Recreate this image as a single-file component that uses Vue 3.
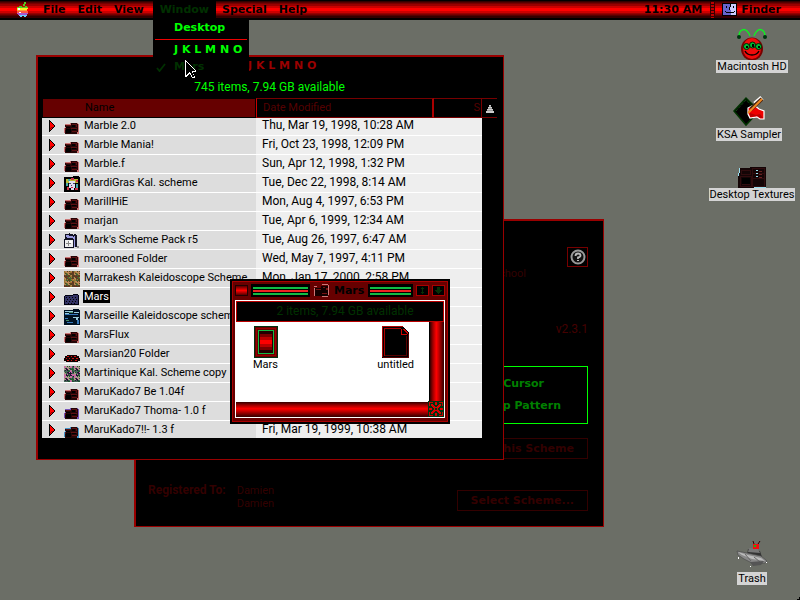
<script setup>
import { ref } from 'vue'

const menus = ['File', 'Edit', 'View', 'Window', 'Special', 'Help']
const openMenu = ref('Window')
const selected = ref('Mars')

const rows = [
  { name: 'Marble 2.0', date: 'Thu, Mar 19, 1998, 10:28 AM', icon: 'folder', tint: '#c77' },
  { name: 'Marble Mania!', date: 'Fri, Oct 23, 1998, 12:09 PM', icon: 'folder', tint: '#c77' },
  { name: 'Marble.f', date: 'Sun, Apr 12, 1998, 1:32 PM', icon: 'folder', tint: '#c77' },
  { name: 'MardiGras Kal. scheme', date: 'Tue, Dec 22, 1998, 8:14 AM', icon: 'mask' },
  { name: 'MarillHiE', date: 'Mon, Aug 4, 1997, 6:53 PM', icon: 'folder', tint: '#c77' },
  { name: 'marjan', date: 'Tue, Apr 6, 1999, 12:34 AM', icon: 'folder', tint: '#c77' },
  { name: "Mark's Scheme Pack r5", date: 'Tue, Aug 26, 1997, 6:47 AM', icon: 'pack' },
  { name: 'marooned Folder', date: 'Wed, May 7, 1997, 4:11 PM', icon: 'folder', tint: '#c77' },
  { name: 'Marrakesh Kaleidoscope Scheme', date: 'Mon, Jan 17, 2000, 2:58 PM', icon: 'mosaic', colors: ['#973', '#542', '#463', '#b85', '#632'] },
  { name: 'Mars', date: '', icon: 'blue' },
  { name: 'Marseille Kaleidoscope scheme', date: '', icon: 'harbor' },
  { name: 'MarsFlux', date: '', icon: 'folder', tint: '#c77' },
  { name: 'Marsian20 Folder', date: '', icon: 'saucer' },
  { name: 'Martinique Kal. Scheme copy', date: '', icon: 'mosaic', colors: ['#c6a', '#253', '#213', '#a98', '#465'] },
  { name: 'MaruKado7 Be 1.04f', date: '', icon: 'folder', tint: '#c77' },
  { name: 'MaruKado7 Thoma- 1.0 f', date: '', icon: 'folder', tint: '#75b' },
  { name: 'MaruKado7!!- 1.3 f', date: 'Fri, Mar 19, 1999, 10:38 AM', icon: 'folder', tint: '#49c' }
]

const tiles = Array.from({ length: 64 }, (_, i) => ({
  x: (i % 8) * 2,
  y: Math.floor(i / 8) * 2,
  c: (i * 7 + Math.floor(i / 8) * 3 + ((i * i) % 5)) % 5
}))
</script>

<template>
  <div class="screen">
    <header class="menubar">
      <svg class="apple" viewBox="0 0 14 16" shape-rendering="crispEdges">
        <path fill="#5c2" d="M8 0h2v2H9v2H7V2h1zM3 4h3v1h3V4h2v1h1v1H1V5h2z" />
        <path fill="#fe2" d="M1 6h11v1h-1v1H1z" />
        <path fill="#f93" d="M1 8h10v1H1z" />
        <path fill="#f54" d="M1 9h11v2H1z" />
        <path fill="#a5c" d="M1 11h11v1h-1v1H2v-1H1z" />
        <path fill="#6cf" d="M3 13h8v1h-1v1H8v-1H6v1H4v-1H3z" />
        <path fill="#fff" d="M2 6h2v2H2zM3 10h2v1H3z" />
      </svg>
      <nav class="menus">
        <button
          v-for="m in menus"
          :key="m"
          class="menu-title"
          :class="{ open: m === openMenu }"
          type="button"
          @click="openMenu = m"
        >{{ m }}</button>
      </nav>
      <span class="clock">11:30 AM</span>
      <i class="grip"></i>
      <button class="app-switch" type="button">
        <svg width="15" height="13" viewBox="0 0 15 13" shape-rendering="crispEdges">
          <path fill="#000" d="M0 0h15v13H0z" />
          <path fill="#66c" d="M1 1h7v3H7v3h2v5H1z" />
          <path fill="#ccf" d="M9 1h5v11H9V7H8V4h1z" />
          <path fill="#000" d="M4 3h1v2H4zM11 3h1v2h-1zM3 8h1v1H3zM4 9h8v1H4zM12 8h1v1h-1z" />
        </svg>
        Finder
      </button>
    </header>

    <main class="desktop">
      <aside class="icons">
        <figure class="icon">
          <svg width="32" height="32" viewBox="0 0 32 32">
            <path fill="none" stroke="#1e2" stroke-width="1.4" d="M3 8C3 2 8 0 11 3q2 2 3 5M29 8c0-6-5-8-8-5q-2 2-3 5" />
            <circle cx="3" cy="9" r="2" fill="#031" />
            <circle cx="29" cy="9" r="2" fill="#031" />
            <ellipse cx="16" cy="21" rx="11" ry="11.500" fill="#700" />
            <ellipse cx="16" cy="20.500" rx="9" ry="10.500" fill="#f00b0b" />
            <g fill="#0b3" stroke="#020" stroke-width="1">
              <circle cx="10.500" cy="18.500" r="3" />
              <circle cx="16.500" cy="17" r="3" />
              <circle cx="22.500" cy="18.500" r="3" />
            </g>
            <path fill="#000" d="M10 18h2v2h-2zM16 16h2v3h-2zM22 18h2v2h-2z" />
            <path fill="none" stroke="#000" stroke-width="1.400" d="M9 23q2 4 7 4t7-4" />
          </svg>
          <figcaption>Macintosh HD</figcaption>
        </figure>
        <figure class="icon sampler">
          <svg width="34" height="32" viewBox="0 0 34 32">
            <path fill="#000" stroke="#030" stroke-width="1.500" d="M2 15L14 2l13 13-13 14z" />
            <path fill="none" stroke="#175c17" stroke-dasharray="1 1" d="M4 15L14 4l10 11" />
            <path fill="#e00" stroke="#fff" stroke-width="1.200" d="M16 12l6-3 5 4 5 2v8h-4l-3-2-7 1-2-4z" />
            <path fill="#b00" d="M18 17l6 2 4-1 3 4h-3l-3-2-7 1z" />
            <path stroke="#fff" stroke-width="5" d="M23 8l7-6" />
            <path stroke="#421" stroke-width="4" d="M19 13L30 3" />
            <path stroke="#e82" stroke-width="2" d="M16 17L30 3" />
          </svg>
          <figcaption>KSA Sampler</figcaption>
        </figure>
        <figure class="icon">
          <svg width="32" height="32" viewBox="0 0 32 32" shape-rendering="crispEdges">
            <path fill="#140506" d="M3 12h11v-1h16v21H2V18h1z" />
            <path fill="none" stroke="#300c0e" d="M5.500 14.500h9v4h-9zM4.500 20.500h11v10h-11zM16.500 12.500h12v18h-12zM17 17.500h11M17 22.500h11M6 28.500h8" />
            <path fill="#000" d="M6 22h8v6H6z" />
            <path fill="#9de" d="M3 12h1v5H3zM2 17h1v3H2zM18 31h12v1H18zM20 14h2v1h-2zM20 17h2v1h-2zM20 20h2v1h-2z" />
            <path fill="#622" d="M23 15h3v1h-3zM23 18h3v1h-3zM23 21h3v1h-3z" />
          </svg>
          <figcaption>Desktop Textures</figcaption>
        </figure>
        <figure class="icon trash">
          <svg width="32" height="32" viewBox="0 0 32 32">
            <path fill="#333" d="M12 9l12 2 2 6-15-2z" />
            <path fill="#777" d="M13 8l9 1 2 4-12-1z" />
            <path fill="#e11" d="M17 4h6v5h-6z" />
            <path fill="#1b1" d="M18 5h2v2h-2z" />
            <path stroke="#300" d="M18 4l-1-3M22 4l2-3" />
            <path fill="#888" stroke="#444" stroke-width=".6" d="M1 11l10 2 14 3 6 5-2 2-11 1-10-5-6-4z" />
            <path fill="#bbb" d="M2 12l10 3 13 3 4 3-13-2-10-4z" />
            <path fill="none" stroke="#666" d="M9 14l6 7M18 17l6 5" />
            <path fill="#555" d="M14 22l14-1-3 4-8 1z" />
            <path fill="#fff" d="M2 17h1v2H2zM14 26h1v1h-1zM30 22h1v1h-1z" />
          </svg>
          <figcaption>Trash</figcaption>
        </figure>
      </aside>

      <section class="window about">
        <button class="help" type="button" aria-label="?">
          <svg width="16" height="16" viewBox="0 0 16 16">
            <circle cx="8" cy="8" r="6.500" fill="#111" stroke="#999" stroke-width="2" />
            <path fill="none" stroke="#bbb" stroke-width="1.800" d="M5.500 7q0-2.500 2.500-2.500T10.500 6.500Q10.500 8 8 8.500V10" />
            <path fill="#bbb" d="M7 11h2v1H7z" />
          </svg>
        </button>
        <p class="school">school</p>
        <p class="version">v2.3.1</p>
        <div class="options">
          <span class="cursor-option">Cursor</span>
          <span>Desktop Pattern</span>
        </div>
        <button class="plate" type="button">This Scheme</button>
        <footer class="registration">
          <strong>Registered To:</strong>
          <span>Damien<br>Damien</span>
          <button class="plate select" type="button">Select Scheme...</button>
        </footer>
      </section>

      <section class="window list">
        <h2 class="list-title">J K L M N O</h2>
        <p class="status">745 items, 7.94 GB available</p>
        <table class="files">
          <thead>
            <tr>
              <th class="h-name">Name</th>
              <th class="h-date">Date Modified</th>
              <th class="h-size">S</th>
              <th class="h-sort">
                <svg width="8" height="8" viewBox="0 0 8 8" shape-rendering="crispEdges">
                  <path fill="#ccc" d="M3 0h2v2H3zM2 2h4v2H2zM1 4h6v2H1zM0 6h8v2H0z" />
                  <path fill="#999" d="M3 1h2v1H3zM2 3h4v1H2zM1 5h6v1H1z" />
                </svg>
              </th>
            </tr>
          </thead>
          <tbody>
            <tr v-for="row in rows" :key="row.name" @click="selected = row.name">
              <td class="name">
                <button class="twist" type="button">
                  <svg width="6" height="12" viewBox="0 0 6 12" shape-rendering="crispEdges">
                    <path fill="#000" d="M0 0h1v1h1v1h1v1h1v1h1v1h1v2H5v1H4v1H3v1H2v1H1v1H0z" />
                    <path fill="#f00" d="M1 2h1v1h1v1h1v1h1v2H4v1H3v1H2v1H1z" />
                    <path fill="#900" d="M1 8h1v1H1zM2 7h2v1H2z" />
                  </svg>
                </button>
                <svg class="glyph" width="16" height="16" viewBox="0 0 16 16" shape-rendering="crispEdges">
                  <g v-if="row.icon === 'folder'">
                    <path :fill="row.tint" d="M1 5h5V4h8v1h1v10H1v-1H0V9h1z" />
                    <path fill="#240607" d="M1 6h6V4h6v1h1v8h-1v2H1V9h1V8H1z" />
                    <path fill="#5c1012" d="M2 6h5v1H2zM8 5h5v1H8zM12 6h1v2h-1zM7 9h6v1H7zM8 12h5v1H8zM1 9h1v2H1z" />
                    <path fill="#000" d="M2 8h4v1H2zM2 10h5v4H2zM8 6h3v2H8zM8 10h4v1H8z" />
                  </g>
                  <g v-else-if="row.icon === 'mask'">
                    <path fill="#000" d="M0 1h9V0h6v1h1v15H0z" />
                    <path fill="#bb3" d="M2 3h12v4H2z" />
                    <path fill="#4aa" d="M2 7h2v3H2zM12 8h2v4h-2zM4 3h2v2H4z" />
                    <path fill="#c34" d="M3 11h2v3H3zM11 12h3v2h-3zM7 2h3v2H7zM12 4h2v2h-2z" />
                    <path fill="#dde" d="M5 5h6v7h-1v2H7v-2H5z" />
                    <path fill="#446" d="M5 7h2v1H5zM9 7h2v1H9zM7 9h1v1H7z" />
                    <path fill="#c24" d="M7 11h2v1H7z" />
                  </g>
                  <g v-else-if="row.icon === 'pack'">
                    <path fill="#112" d="M1 1h4V0h1v1h3v1h1V1h2v1h1v12h-3v1H0V6h1z" />
                    <path fill="#99d" d="M2 2h3v1h4v1h1V3h1v11h-1V6H9V5H3V4H2z" />
                    <path fill="#eee" d="M1 7h8v7H1z" />
                    <path fill="#888" d="M4 8h1v5H4zM2 10h5v1H2zM13 13h2v2h-2z" />
                    <path fill="#fff" d="M5 8h3v2H5z" />
                  </g>
                  <g v-else-if="row.icon === 'mosaic'">
                    <path fill="#211" d="M0 1h9V0h6v1h1v15H0z" />
                    <rect v-for="t in tiles" :key="t.x + '-' + t.y" :x="t.x" :y="t.y" width="2" height="2" :fill="row.colors[t.c]" />
                    <rect v-for="t in tiles" :key="'b' + t.x + '-' + t.y" :x="t.x + 1" :y="t.y" width="1" height="1" :fill="row.colors[(t.c + 3) % 5]" />
                  </g>
                  <g v-else-if="row.icon === 'blue'">
                    <path fill="#001" d="M0 6h1V5h8V4h5v1h1v10H0z" />
                    <path fill="#336" d="M1 6h8V5h5v9H1z" />
                    <path fill="#000" d="M2 7h1v1H2zM5 7h1v1H5zM8 7h1v1H8zM11 7h1v1h-1zM3 9h1v1H3zM6 9h1v1H6zM9 9h1v1H9zM12 9h1v1h-1zM2 11h1v1H2zM5 11h1v1H5zM8 11h1v1H8zM11 11h1v1h-1zM4 13h1v1H4zM7 13h1v1H7zM10 13h1v1h-1z" />
                  </g>
                  <g v-else-if="row.icon === 'harbor'">
                    <path fill="#012" d="M0 1h9V0h6v1h1v15H0z" />
                    <path fill="#9cd" d="M1 2h8v1H1zM10 3h5v1h-5zM1 4h4v1H1zM9 8h6v1H9zM12 9h2v2h-2z" />
                    <path fill="#37b" d="M1 5h13v1H1zM3 13h6v1H3zM13 11h2v4h-2zM1 9h3v1H1z" />
                    <path fill="#486" d="M5 3h4v1H5zM2 11h3v1H2z" />
                  </g>
                  <g v-else>
                    <path fill="#100" d="M3 8h10v1h2v2h1v3h-2v1H2v-1H0v-3h1V9h2z" />
                    <path fill="#c11" d="M3 9h2v1H3zM7 9h1v1H7zM10 9h2v1h-2zM2 11h1v1H2zM5 11h1v1H5zM8 11h2v1H8zM12 11h2v1h-2zM3 13h2v1H3zM7 13h1v1H7zM11 13h2v1h-2z" />
                  </g>
                </svg>
                <span class="label" :class="{ picked: row.name === selected }">{{ row.name }}</span>
              </td>
              <td class="date">{{ row.date }}</td>
            </tr>
          </tbody>
        </table>
      </section>

      <section class="mars">
        <header class="mars-bar">
          <button class="box close" type="button"></button>
          <i class="stripes wide"></i>
          <h2>
            <svg width="16" height="14" viewBox="0 0 16 14" shape-rendering="crispEdges">
              <path fill="#c77" d="M0 2h3v1H0zM0 4h1v8H0zM8 0h6v1H8zM14 1h1v10h-1zM8 12h6v1H8z" />
              <path fill="#100" d="M1 4h6V2h7v10H1z" />
              <path fill="#711" d="M2 5h5v1H2zM9 3h2v1H9zM12 4h2v2h-2zM8 9h5v1H8z" />
            </svg>
            Mars
          </h2>
          <i class="stripes"></i>
          <button class="box" type="button">
            <svg width="7" height="7" viewBox="0 0 7 7" shape-rendering="crispEdges"><path fill="#063006" d="M3 0h1v1h1v1H4v3h1v1H4v1H3V6H2V5h1V2H2V1h1z" /></svg>
          </button>
          <button class="box" type="button">
            <svg width="7" height="7" viewBox="0 0 7 7" shape-rendering="crispEdges"><path fill="#063006" d="M2 0h3v3h2v1H6v1H5v1H4v1H3V6H2V5H1V4H0V3h2z" /></svg>
          </button>
        </header>
        <div class="mars-body">
          <p class="mars-status">2 items, 7.94 GB available</p>
          <div class="pane">
            <figure>
              <svg width="24" height="32" viewBox="0 0 24 32" shape-rendering="crispEdges">
                <path fill="#600" stroke="#031" d="M.5.500h23v31H.5z" />
                <path fill="none" stroke="#900" d="M2.500 2.500h19v27h-19z" />
                <path fill="#200" stroke="#1b4" d="M4.500 4.500h15v23h-15z" />
                <path fill="#700" d="M6 8h12v16H6z" />
                <path fill="#b00" d="M6 11h12v10H6z" />
                <path fill="#f00" d="M6 14h12v4H6z" />
              </svg>
              <figcaption>Mars</figcaption>
            </figure>
            <figure>
              <svg width="28" height="32" viewBox="0 0 28 32" shape-rendering="crispEdges">
                <path fill="#000" d="M0 0h21v1h1v1h1v1h1v1h1v1h1v1h1v26H0z" />
                <path fill="none" stroke="#a00" d="M.5 31V.500h20M2.500 30V2.500h16" />
                <path fill="none" stroke="#500" d="M1 31.500h25.500V8M3 29.500h21.500V10" />
                <path fill="none" stroke="#c00" d="M19.500 3v5h5M21 3.500h1v1h1v1h1v1h1v1" />
              </svg>
              <figcaption>untitled</figcaption>
            </figure>
          </div>
          <i class="vbar"></i>
          <i class="hbar"></i>
          <svg class="grow" viewBox="0 0 16 16" shape-rendering="crispEdges">
            <path fill="#031" d="M0 0h16v16H0z" />
            <path fill="none" stroke="#c00" d="M1.500 1.500h13v13h-13z" />
            <path fill="#031" d="M5 1h2v1H5zM9 1h2v1H9zM5 14h2v1H5zM9 14h2v1H9zM1 5h1v2H1zM1 9h1v2H1zM14 5h1v2h-1zM14 9h1v2h-1z" />
            <path fill="#d00" d="M3 3h2v1h1v1h1v1h2V5h1V4h1V3h2v2h-1v1h-1v1h-1v2h1v1h1v1h1v2h-2v-1h-1v-1H9v-1H7v1H6v1H5v1H3v-2h1v-1h1V9h1V7H5V6H4V5H3zM7 2h2v2H7zM7 12h2v2H7zM2 7h2v2H2zM12 7h2v2h-2z" />
            <path fill="#031" d="M7 7h2v2H7z" />
          </svg>
        </div>
      </section>
    </main>

    <div v-if="openMenu === 'Window'" class="dropdown">
      <button type="button">Desktop</button>
      <hr>
      <button type="button">J K L M N O</button>
      <button class="dim" type="button">
        <svg width="10" height="9" viewBox="0 0 10 9"><path fill="none" stroke="#003000" stroke-width="1.800" d="M1 5l2.500 3L9 1" /></svg>Mars
      </button>
    </div>

    <svg class="pointer" width="12" height="18" viewBox="0 0 12 18" shape-rendering="crispEdges">
      <path fill="#fff" d="M0 0h1v1h1v1h1v1h1v1h1v1h1v1h1v1h1v1h1v1h1v1h1v2H8v2h1v2h1v2H7v-1H6v-2H5v-1H4v1H3v1H2v1H0z" />
      <path fill="#000" d="M1 2h1v1h1v1h1v1h1v1h1v1h1v1h1v1h1v1h1v1H7v2h1v2h1v2H7v-2H6v-2H5v-1H4v1H3v1H2v1H1z" />
    </svg>
    <i class="corner"></i>
  </div>
</template>

<style>
body {
  margin: 0;
  background: #6b6e66;
}
</style>

<style scoped>
.screen {
  position: relative;
  display: flex;
  flex-direction: column;
  min-height: 100vh;
  overflow: hidden;
  background: #6b6e66;
  font: 11px/13px Roboto, sans-serif;
  color: #000;
}
button {
  margin: 0;
  padding: 0;
  border: 0;
  background: none;
  color: inherit;
  font: inherit;
}
p, h2, figure, hr {
  margin: 0;
}
svg {
  display: block;
  flex: none;
}
.menubar, .dropdown, .list-title, .mars h2, .options, .plate {
  font: bold 11px/14px "DejaVu Sans", sans-serif;
}

.menubar {
  display: flex;
  align-items: center;
  height: 20px;
  box-sizing: border-box;
  padding: 0 19px 1px 16px;
  background: linear-gradient(#000 1px, #300 1px 2px, #500 2px 3px, #700 3px 4px, #900 4px 6px, #c00 6px 8px, #f00 8px 11px, #c00 11px 13px, #900 13px 14px, #700 14px 15px, #500 15px 16px, #300 16px 18px, #000 18px);
}
.apple {
  width: 14px;
  height: 16px;
}
.menus {
  display: flex;
  align-self: stretch;
  margin: 0 auto 0 7px;
}
.menu-title {
  padding: 0 6px;
}
.menu-title.open {
  padding: 0 7px;
  margin: 0 0 -1px 3px;
  background: #000;
  color: #003000;
}
.grip {
  width: 3px;
  height: 17px;
  margin: 0 7px 0 8px;
  border: solid #300;
  border-width: 0 1px;
  background: repeating-linear-gradient(#300 0 1px, #b00 1px 3px);
}
.app-switch {
  display: flex;
  align-items: center;
  gap: 4px;
}

.desktop {
  flex: 1;
  display: flex;
  justify-content: flex-end;
}
.icons {
  display: flex;
  flex-direction: column;
  gap: 15px;
  width: 96px;
  padding: 8px 0 15px;
}
.icon {
  display: flex;
  flex-direction: column;
  align-items: center;
}
.icon.sampler {
  margin-top: 8px;
  padding-right: 6px;
}
.icon.trash {
  margin-top: auto;
}
.icon figcaption {
  padding: 0 1px;
  background: #d4d4d4;
  white-space: nowrap;
}

.window {
  position: absolute;
  box-sizing: border-box;
  border: solid #900;
  border-width: 2px 1px 1px 2px;
  background: #000;
}
.about {
  left: 134px;
  top: 219px;
  width: 470px;
  display: flex;
  flex-direction: column;
  align-items: flex-end;
  padding: 26px 15px 15px 12px;
  color: #300;
}
.help {
  display: grid;
  place-items: center;
  width: 21px;
  height: 20px;
  border: 1px solid #700;
}
.school {
  padding-right: 62px;
}
.version {
  font-size: 12px;
  margin: 43px 0 30px;
  color: #400;
}
.options {
  display: flex;
  flex-direction: column;
  align-items: flex-end;
  gap: 8px;
  width: 240px;
  box-sizing: border-box;
  padding: 10px 26px 10px 0;
  border: 1px solid #0f0;
  color: #008000;
}
.cursor-option {
  padding-right: 17px;
}
.plate {
  height: 21px;
  margin-top: 14px;
  padding: 0 13px;
  border: 1px solid #300;
  color: #300;
}
.registration {
  display: flex;
  align-items: flex-start;
  gap: 11px;
  align-self: stretch;
  margin-top: 25px;
}
.registration strong {
  font-size: 12px;
}
.registration .plate {
  margin: 6px 0 0 auto;
}

.list {
  left: 36px;
  top: 55px;
  width: 468px;
  padding: 2px 6px 21px 4px;
}
.list-title {
  padding-left: 206px;
  color: #900;
}
.status {
  padding: 8px 0 4px;
  font-size: 12px;
  text-align: center;
  color: #0f0;
}
.files, .files thead, .files tbody {
  display: block;
}
.files tr {
  display: grid;
}
.files thead tr {
  grid-template-columns: 214px 1fr 48px 15px;
  height: 20px;
}
.files th {
  box-sizing: border-box;
  padding: 2px 0 0;
  border: 1px solid #700;
  border-left: 0;
  font-weight: normal;
  text-align: left;
  color: #500;
}
.files .h-name {
  padding-left: 42px;
  border-color: #000;
  border-left: 1px solid #000;
  background: #600;
  color: #000;
}
.files .h-date {
  padding-left: 6px;
  border-left: 1px solid #c00;
  border-right: 2px solid #a00;
}
.files .h-size {
  padding-right: 1px;
  text-align: right;
}
.files .h-sort {
  display: grid;
  place-items: center;
  border-right: 0;
}
.files tbody {
  max-height: 320px;
  margin-right: 15px;
  overflow: hidden;
}
.files tbody tr {
  grid-template-columns: 214px 1fr;
  height: 19px;
}
.files tbody tr:first-child {
  margin-top: -1px;
}
.files td {
  padding: 0;
  border-bottom: 1px solid #fff;
  white-space: nowrap;
}
.files .name {
  display: flex;
  align-items: center;
  padding-left: 7px;
  background: #ddd;
}
.glyph {
  margin: 2px 3px 0 9px;
}
.label {
  margin-bottom: 2px;
  padding: 0 1px;
}
.label.picked {
  background: #000;
  color: #fff;
}
.files .date {
  padding-left: 6px;
  background: #eee;
  font-size: 12px;
  line-height: 17px;
}

.mars {
  position: absolute;
  left: 230px;
  top: 279px;
  width: 220px;
  box-sizing: border-box;
  border: 2px solid #000;
  padding: 0 3px 4px;
  background: #600;
  box-shadow: inset 1px 1px #a00, inset -1px -1px #a00;
}
.mars-bar {
  display: flex;
  align-items: center;
  gap: 3px;
  height: 19px;
}
.mars-bar h2 {
  display: flex;
  align-items: center;
  gap: 4px;
  padding: 0 1px;
}
.box {
  display: grid;
  place-items: center;
  width: 13px;
  height: 11px;
  box-sizing: border-box;
  border: 1px solid #a00;
  background: #000;
}
.box.close {
  border-color: #200;
  background: linear-gradient(#500, #f00 50%, #500);
}
.stripes {
  flex: 1;
  height: 13px;
  box-sizing: border-box;
  border: solid #000;
  border-width: 2px;
  background: linear-gradient(#000 1px, #1b4 1px 3px, #000 3px 4px, #e22 4px 6px, #000 6px 7px, #1b4 7px 9px);
}
.stripes.wide {
  flex: 1.35;
}
.mars-body {
  display: grid;
  grid-template-columns: 1fr 15px;
  border: 1px solid #fff;
  background: #fff;
}
.mars-status {
  grid-column: 1 / 3;
  padding: 3px 0 3px 10px;
  border: 1px solid #b00;
  background: #000;
  color: #003000;
  font-size: 12px;
  text-align: center;
}
.pane {
  display: flex;
  justify-content: space-between;
  padding: 4px 15px 31px 17px;
  background: #fff;
}
.pane figure {
  display: flex;
  flex-direction: column;
  align-items: center;
}
.vbar {
  border-left: 1px solid #000;
  background: linear-gradient(90deg, #300, #900 20%, #f00 45%, #c00 60%, #500 90%, #300);
}
.hbar {
  height: 15px;
  background: linear-gradient(#300, #900 20%, #f00 45%, #c00 60%, #500 90%, #300);
}
.grow {
  width: 16px;
  height: 16px;
  margin: -1px 0 0 -1px;
}

.dropdown {
  position: absolute;
  left: 153px;
  top: 19px;
  width: 96px;
  box-sizing: border-box;
  display: flex;
  flex-direction: column;
  padding: 0 1px 2px;
  background: #000;
  color: #0f0;
}
.dropdown button {
  display: flex;
  align-items: center;
  height: 18px;
  padding-left: 20px;
}
.dropdown hr {
  height: 1px;
  margin: 2px 1px 1px;
  border: 0;
  background: #e00;
}
.dropdown .dim {
  height: 16px;
  gap: 8px;
  padding-left: 2px;
  color: #003000;
}
.pointer {
  position: absolute;
  left: 185px;
  top: 60px;
}
.corner {
  position: absolute;
  right: 0;
  bottom: 0;
  width: 5px;
  height: 5px;
  background: radial-gradient(circle at 0 0, transparent 5px, #000 5px);
}
</style>
